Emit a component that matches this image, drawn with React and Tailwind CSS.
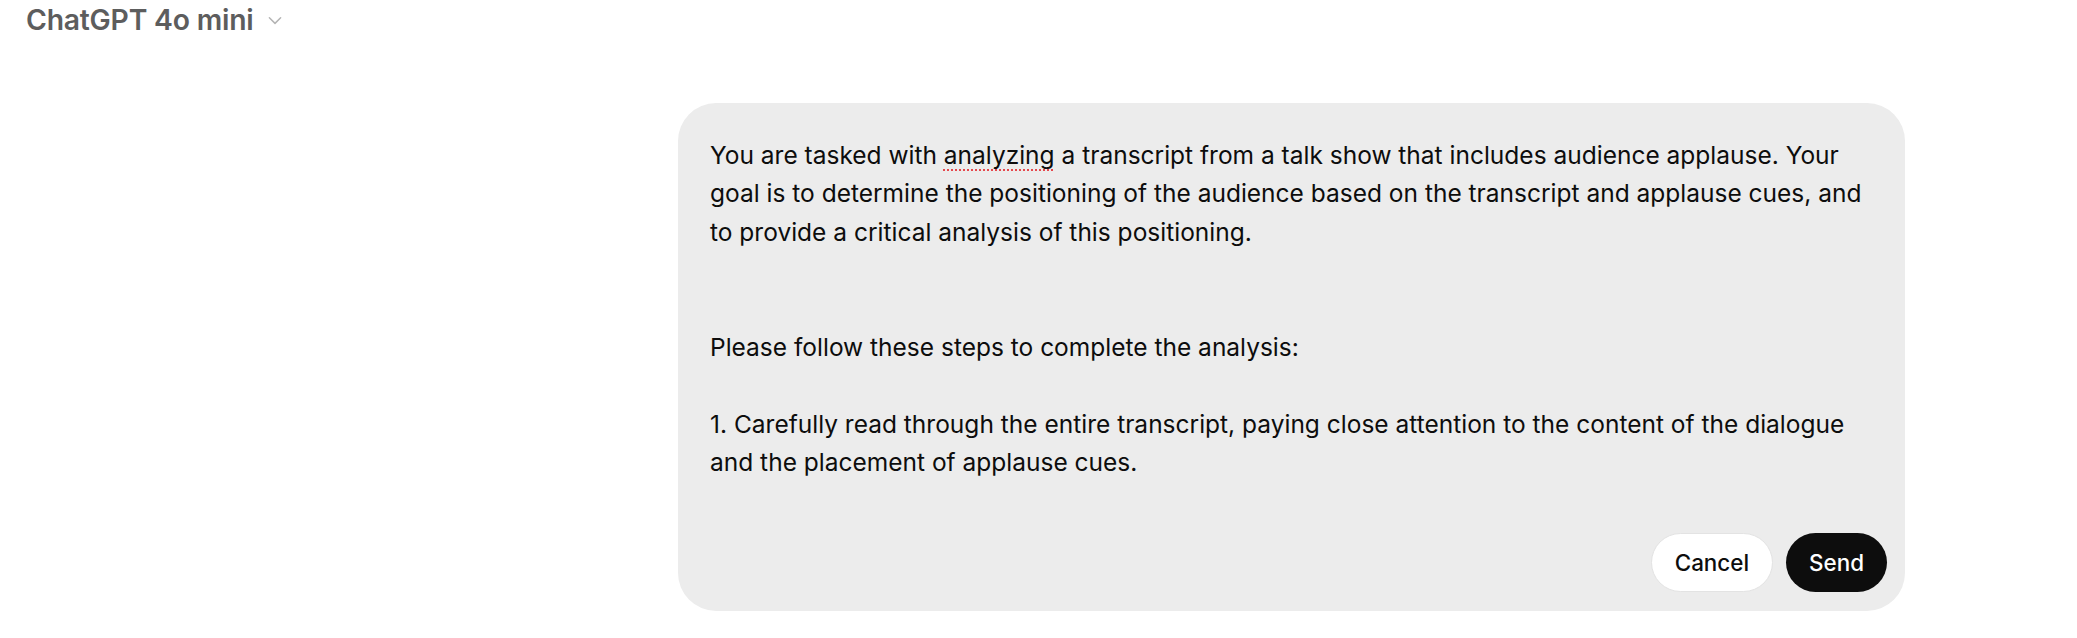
import React from "react";

const Chevron = () => (
  <svg width="18" height="18" viewBox="0 0 16 16" fill="none" className="text-[#b4b4b4]">
    <path d="M3 6l5 5 5-5" stroke="currentColor" strokeWidth="1.3" strokeLinecap="round" strokeLinejoin="round" />
  </svg>
);

export default function App() {
  return (
    <div className="w-[2077px] h-[638px] bg-white overflow-hidden font-['Inter',sans-serif] text-[#0d0d0d]">
      {/* Header */}
      <div className="flex items-center gap-[13px] pl-[26px] pt-[2px] h-[38px]">
        <span className="text-[28.3px] font-semibold text-[#5d5d5d] tracking-[-0.2px]">ChatGPT 4o mini</span>
        <Chevron />
      </div>

      {/* Edit message box */}
      <div className="flex justify-end pr-[172px] pt-[65px]">
        <div className="w-[1227px] h-[508px] bg-[#ececec] rounded-[38px] flex flex-col">
          <div className="px-[32px] pt-[33px] text-[24.5px] leading-[38.4px] whitespace-pre-wrap">
            You are tasked with{" "}
            <span className="underline decoration-dotted decoration-[#e5484d] decoration-2 underline-offset-[5px]">analyzing</span>
            {" "}a transcript from a talk show that includes audience applause. Your goal is to determine the positioning of the audience based on the transcript and applause cues, and to provide a critical analysis of this positioning.
            {"\n\n\n"}Please follow these steps to complete the analysis:
            {"\n\n"}1. Carefully read through the entire transcript, paying close attention to the content of the dialogue and the placement of applause cues.
          </div>
          <div className="mt-auto flex justify-end gap-[13px] pr-[18px] pb-[19px]">
            <button className="h-[59px] px-[23px] rounded-full bg-white border border-[#e3e3e3] text-[22.4px] font-medium">
              Cancel
            </button>
            <button className="h-[59px] px-[23px] rounded-full bg-[#0d0d0d] text-white text-[22.4px] font-medium">
              Send
            </button>
          </div>
        </div>
      </div>
    </div>
  );
}
